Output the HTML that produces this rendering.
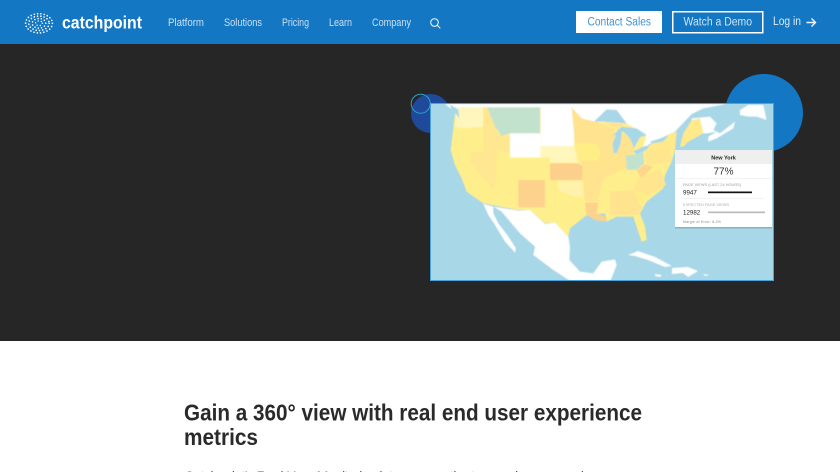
<!DOCTYPE html>
<html><head><meta charset="utf-8"><title>Catchpoint</title>
<style>
html,body{margin:0;padding:0;width:840px;height:472px;overflow:hidden;background:#fff}
svg{display:block}
text{font-family:"Liberation Sans",sans-serif}
</style></head><body>
<svg width="840" height="472" viewBox="0 0 840 472" xmlns="http://www.w3.org/2000/svg">
<rect width="840" height="472" fill="#fff"/>
<rect y="44" width="840" height="297" fill="#262626"/>
<rect width="840" height="44" fill="#1477c3"/>
<!-- logo -->
<g fill="none" stroke="#fff" stroke-linecap="round">
<ellipse cx="39" cy="23.3" rx="13.4" ry="9.6" stroke-dasharray="0 3.3" stroke-width="1.7"/>
<ellipse cx="39" cy="23.3" rx="10.2" ry="7.2" stroke-dasharray="0 3.3" stroke-width="1.7"/>
<ellipse cx="39" cy="23.3" rx="6.8" ry="4.8" stroke-dasharray="0 3.3" stroke-width="1.6"/>
<ellipse cx="39" cy="23.3" rx="3.4" ry="2.4" stroke-dasharray="0 3.2" stroke-width="1.4"/>
</g>
<text x="62" y="28.5" font-size="17.5" font-weight="700" fill="#fff" textLength="80" lengthAdjust="spacingAndGlyphs">catchpoint</text>
<!-- nav -->
<g font-size="11" fill="#c9e0f3">
<text x="168" y="26" textLength="36" lengthAdjust="spacingAndGlyphs">Platform</text>
<text x="224" y="26" textLength="38" lengthAdjust="spacingAndGlyphs">Solutions</text>
<text x="282" y="26" textLength="27" lengthAdjust="spacingAndGlyphs">Pricing</text>
<text x="329" y="26" textLength="23" lengthAdjust="spacingAndGlyphs">Learn</text>
<text x="372" y="26" textLength="39" lengthAdjust="spacingAndGlyphs">Company</text>
</g>
<g fill="none" stroke="#e3f0fa" stroke-width="1.1"><circle cx="434.5" cy="22.5" r="3.8"/><path d="M437.3 25.3L440 28" stroke-linecap="round"/></g>
<rect x="576" y="11" width="86" height="22" fill="#fff"/>
<text x="587.5" y="25.5" font-size="11.5" fill="#3f93d3" textLength="63.5" lengthAdjust="spacingAndGlyphs">Contact Sales</text>
<rect x="672.75" y="11.75" width="90" height="21" fill="none" stroke="#fff" stroke-width="1.5"/>
<text x="683.5" y="25.5" font-size="11.5" fill="#cfe4f5" textLength="68.5" lengthAdjust="spacingAndGlyphs">Watch a Demo</text>
<text x="773" y="25" font-size="11.5" fill="#dcecf8" textLength="28" lengthAdjust="spacingAndGlyphs">Log in</text>
<path d="M806.5 22.5H815M811.5 18.5L815.5 22.5L811.5 26.5" fill="none" stroke="#f2f8fd" stroke-width="1.4"/>
<!-- circles -->
<circle cx="764" cy="113" r="39" fill="#1477c3"/>
<circle cx="430.5" cy="113.5" r="19.5" fill="#1f4a9c"/>
<circle cx="420.7" cy="103.7" r="9.5" fill="none" stroke="#2ba3c8" stroke-width="1"/>
<!-- map -->
<defs>
<clipPath id="m"><rect x="431" y="104" width="342" height="176"/></clipPath>
<filter id="b" x="0" y="0" width="1" height="1"><feGaussianBlur stdDeviation=".4"/></filter>
</defs>
<rect x="430.5" y="103.5" width="343" height="177" fill="#a8d7e8" stroke="#4aa3dc"/>
<g clip-path="url(#m)">
<g filter="url(#b)">
<!-- Canada east -->
<g transform="translate(620 100) scale(.3333)" fill="#fff">
<path d="M-400 12H320L250 25L215 42L165 95L100 125L60 150L-100 90L-200 30Z"/>
<path d="M215 55L270 50L290 70L280 90L300 100L345 65L340 85L290 115L265 125L265 110L290 95L262 100L250 100L215 60Z"/>
<path d="M360 30L385 15L430 15L440 60L410 50L385 50L360 45Z"/>
</g>
<g transform="translate(430 100) scale(.3333)">
<!-- canada west -->
<path d="M45 12H450V40L85 30L80 40Z" fill="#fff"/>
<!-- Mexico -->
<path d="M190 320L265 332L300 330L345 372L375 368L415 410L420 440L418 480L450 515L490 520L515 485L555 478L560 495L540 546L425 546L370 510L310 465L315 440L270 400L240 365L215 335Z" fill="#fff"/>
<path d="M160 312L190 320L190 340L205 370L232 405L258 445L255 458L225 425L195 375L175 345Z" fill="#fff"/>
<!-- US base -->
<path d="M85 22H425L455 55L495 65L590 70L650 105L640 140L700 125L720 100L735 98L735 150L725 185L705 225L700 265L650 305L630 340L645 380L650 420L635 425L610 350L560 350L530 365L525 340L470 345L420 385L415 410L375 368L345 370L300 330L262 330L160 310L110 275L95 235L75 195L62 150L70 85L75 40Z" fill="#ffef8c"/>
<!-- states -->
<path d="M85 22H160V80L100 85L75 80L78 45Z" fill="#fff6bd"/>
<path d="M160 22H175L205 105L240 110V155H160V80Z" fill="#ffe690"/>
<path d="M172 22H330V100H240L215 108L195 80Z" fill="#c3e2cd"/>
<path d="M240 100H331L332 172H240Z" fill="#fff"/>
<path d="M332 22H425L432 82V138H332Z" fill="#fff"/>
<path d="M332 138H432L445 188H360V172H332Z" fill="#fff7bb"/>
<path d="M360 190H445L457 198V240H360Z" fill="#fdcf8c"/>
<path d="M122 155H200V240L190 270L122 190Z" fill="#ffe690"/>
<path d="M265 240H345V322H265Z" fill="#fdd28c"/>
<path d="M385 242H457L460 293L420 285L385 270Z" fill="#fff3ab"/>
<path d="M425 22L455 55L495 65L465 100L470 130H435Z" fill="#ffe38e"/>
<path d="M465 100L495 65L555 85L548 155L505 180L500 130H470Z" fill="#ffe38e"/>
<path d="M520 65L590 72L560 85Z" fill="#ffe38e"/>
<path d="M435 130H500L512 160L505 180L450 182Z" fill="#ffee85"/>
<path d="M450 182H505L530 230L515 250L505 305H465L460 240L457 195Z" fill="#ffe38e"/>
<path d="M505 180L548 155L560 160L587 165L590 205L545 225L530 230Z" fill="#ffe48d"/>
<path d="M560 160L575 95L600 115L612 145L610 165L587 165Z" fill="#ffe38e"/>
<path d="M587 165H610L640 150L643 190L620 210H590Z" fill="#c3e2cd"/>
<path d="M620 212L643 193L670 200L635 235Z" fill="#fdd58c"/>
<path d="M530 235L620 210L620 240L510 275L520 250Z" fill="#ffef8c"/>
<path d="M625 235L690 205L708 255L660 285L610 270Z" fill="#ffe58e"/>
<path d="M610 272L660 280L635 320Z" fill="#ffec88"/>
<path d="M540 275L610 270L635 325L625 345H540Z" fill="#ffe38e"/>
<path d="M465 308H505L500 340L530 352L528 365L495 360L470 345Z" fill="#fdd28c"/>
<path d="M645 152L720 150L725 185L650 195Z" fill="#ffe58e"/>
<!-- lakes -->
<g fill="#a8d7e8">
<path d="M492 65L530 28L560 30L590 70L560 68L520 65Z"/>
<path d="M565 85L548 130L550 158L560 160L572 130L575 95Z"/>
<path d="M545 110L575 80L620 85L650 105L630 112L612 145L600 115L580 95Z"/>
<path d="M608 155L640 140L665 135L650 150L620 162Z"/>
<path d="M660 125L700 112L705 120L670 132Z"/>
<path d="M190 335L215 345L240 385L262 430L258 445L232 405L205 370Z"/>
<path d="M60 14L85 28L88 55L78 42L65 32Z"/>
</g>
</g>
<!-- Maine & New England -->
<g transform="translate(620 100) scale(.3333)">
<path d="M75 155L95 130L130 125L155 100L170 95L165 150H75Z" fill="#ffe98a"/>
<path d="M180 140L190 100L215 60L240 55L250 100L205 125L190 140Z" fill="#ffe98a"/>
</g>
<!-- Caribbean -->
<path d="M628 255L638 251L655 257L672 266L665 267L648 260L635 256Z" fill="#fff"/>
<path d="M672 268L688 267L698 271L688 277L683 273L672 274Z" fill="#fff"/>
<path d="M655 274L662 275L660 277L655 276ZM703 274L710 275L705 276Z" fill="#fff"/>
</g>
<!-- popup -->
<rect x="675" y="150" width="97" height="77" fill="#000" opacity=".18" transform="translate(0 1.5)"/>
<rect x="675" y="150" width="97" height="77" fill="#fff"/>
<rect x="675" y="150" width="97" height="14" fill="#efefef"/>
<text x="723.5" y="159.5" font-size="5.5" font-weight="700" fill="#222" text-anchor="middle">New York</text>
<text x="723.5" y="174.5" font-size="10" fill="#333" text-anchor="middle">77%</text>
<path d="M675 178.5H772M683 198.5H764" stroke="#eee" stroke-width=".7"/>
<text x="683" y="186" font-size="3.8" fill="#999" textLength="58">PAGE VIEWS (LAST 24 HOURS)</text>
<text x="683" y="194.5" font-size="6.2" fill="#222">9947</text>
<rect x="708" y="191.5" width="44" height="1.7" fill="#111"/>
<text x="683" y="206" font-size="3.8" fill="#aaa" textLength="46">EXPECTED PAGE VIEWS</text>
<text x="683" y="214.5" font-size="6.2" fill="#222">12982</text>
<rect x="708" y="211.5" width="57" height="1.7" fill="#bbb"/>
<text x="683" y="223" font-size="3.6" fill="#888" textLength="38">Margin of Error: 8.2%</text>
</g>
<!-- content -->
<g font-size="23.5" font-weight="700" fill="#2a2a2a">
<text x="184" y="420.5" textLength="458" lengthAdjust="spacingAndGlyphs">Gain a 360° view with real end user experience</text>
<text x="184" y="445" textLength="74" lengthAdjust="spacingAndGlyphs">metrics</text>
</g>
<text x="184" y="481" font-size="14" fill="#555" textLength="428">Catchpoint's Real User Monitoring lets you see the true end user experience</text>
</svg>
</body></html>
